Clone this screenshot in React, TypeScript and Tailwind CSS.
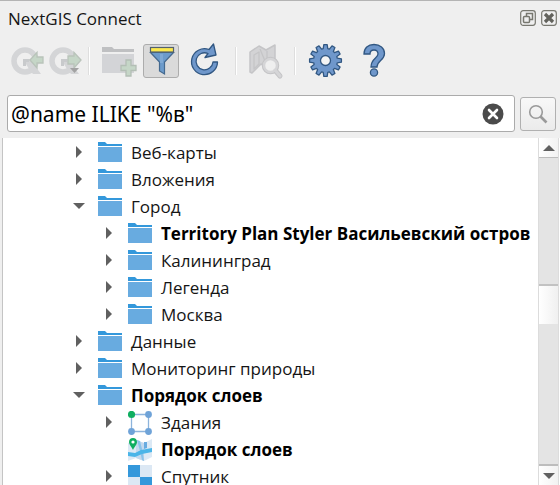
import { useState, type ReactNode } from "react";

type Kind = "folder" | "vector" | "webmap" | "raster";

interface TreeNode {
  label: string;
  kind: Kind;
  depth: 0 | 1;
  arrow?: "open" | "closed";
  bold?: boolean;
}

const nodes: TreeNode[] = [
  { label: "Веб-карты", kind: "folder", depth: 0, arrow: "closed" },
  { label: "Вложения", kind: "folder", depth: 0, arrow: "closed" },
  { label: "Город", kind: "folder", depth: 0, arrow: "open" },
  { label: "Territory Plan Styler Васильевский остров", kind: "folder", depth: 1, arrow: "closed", bold: true },
  { label: "Калининград", kind: "folder", depth: 1, arrow: "closed" },
  { label: "Легенда", kind: "folder", depth: 1, arrow: "closed" },
  { label: "Москва", kind: "folder", depth: 1, arrow: "closed" },
  { label: "Данные", kind: "folder", depth: 0, arrow: "closed" },
  { label: "Мониторинг природы", kind: "folder", depth: 0, arrow: "closed" },
  { label: "Порядок слоев", kind: "folder", depth: 0, arrow: "open", bold: true },
  { label: "Здания", kind: "vector", depth: 1, arrow: "closed" },
  { label: "Порядок слоев", kind: "webmap", depth: 1, bold: true },
  { label: "Спутник", kind: "raster", depth: 1, arrow: "closed" },
];

function NodeIcon({ kind }: { kind: Kind }) {
  return (
    <svg viewBox="0 0 24 24" className="size-6 shrink-0" aria-hidden="true">
      {kind === "folder" && (
        <>
          <path d="M0 1h7l2 2h15v2H0z" fill="#3498db" />
          <path d="M0 6h24v15H0z" fill="#68abe0" />
        </>
      )}
      {kind === "vector" && (
        <>
          <path d="M3.5 3.5h17v17h-17z" fill="none" stroke="#8db4dc" strokeWidth="1.3" />
          <circle cx="20.5" cy="3.5" r="3.4" fill="#6fa3d8" />
          <circle cx="3.5" cy="20.5" r="3.4" fill="#6fa3d8" />
          <circle cx="20.5" cy="20.5" r="3.4" fill="#6fa3d8" />
          <circle cx="3.5" cy="3.5" r="3.6" fill="#0fae60" />
        </>
      )}
      {kind === "webmap" && (
        <>
          <path d="M0 5l8-3 8 3 8-4v18l-8 4-8-3-8 3z" fill="#dce9f5" />
          <path d="M8 2l8 3v18l-8-3z" fill="#c3d9ee" />
          <path d="M9 2l3 1 3 12 1 8-2-1-2-9z" fill="#8ac3ea" />
          <path d="M0 14l7 1 6-3 11-2v4l-10 2-7 3-7-1z" fill="#4bb5e8" />
          <path d="M16 4l3 0 0 6-3 1z" fill="#68abe0" />
          <path d="M5 0a4.2 4.2 0 0 1 4 4c0 3-3 5-4 8C4 9 1 7 1 4a4.2 4.2 0 0 1 4-4z" fill="#0fae60" />
          <circle cx="5" cy="4" r="1.6" fill="#fff" />
        </>
      )}
      {kind === "raster" && (
        <>
          <path d="M0 0h24v24H0z" fill="#dce8f4" />
          <path d="M0 0h12v12H0zM12 12h12v12H12z" fill="#3498db" />
        </>
      )}
    </svg>
  );
}

function Arrow({ state }: { state: "open" | "closed" }) {
  return (
    <svg viewBox="0 0 12 12" className="size-3" aria-hidden="true">
      <path d={state === "open" ? "M0 3h12L6 9z" : "M3 0l6 6-6 6z"} fill="#606060" />
    </svg>
  );
}

function TreeRow({ node }: { node: TreeNode }) {
  return (
    <li
      role="treeitem"
      aria-expanded={node.arrow ? node.arrow === "open" : undefined}
      className={`flex h-[27px] items-center whitespace-nowrap ${node.depth === 1 ? "pl-[100px]" : "pl-[70px]"} ${node.bold ? "font-bold text-black" : ""}`}
    >
      <span className="mr-[13px] flex w-3 shrink-0 pb-0.5">
        {node.arrow && (
          <button type="button" aria-label={`Toggle ${node.label}`}>
            <Arrow state={node.arrow} />
          </button>
        )}
      </span>
      <NodeIcon kind={node.kind} />
      <span className="ml-[9px]">{node.label}</span>
    </li>
  );
}

function ToolButton({ label, pressed, disabled, children }: { label: string; pressed?: boolean; disabled?: boolean; children: ReactNode }) {
  return (
    <button
      type="button"
      aria-label={label}
      aria-pressed={pressed}
      disabled={disabled}
      className={`flex h-[34px] w-9 shrink-0 items-center justify-center rounded-[3px] border ${pressed ? "border-[#acacac] bg-[#dadada]" : "border-transparent"}`}
    >
      <svg viewBox="0 0 34 32" className="h-8 w-[34px] shrink-0 overflow-visible" aria-hidden="true">
        {children}
      </svg>
    </button>
  );
}

function Separator() {
  return <div className="h-7 w-0.5 shrink-0 border-l border-[#dedede] bg-white" />;
}

function QLogo() {
  return (
    <>
      <circle cx="14" cy="16" r="11" fill="none" stroke="#d4d5d7" strokeWidth="5.500" />
      <path d="M12 14h7l11 15h-8l-4-5z" fill="#d4d5d7" />
      <path d="M12 14h6v3h-3v4h-3z" fill="#c8cacc" />
    </>
  );
}

const gearPath = Array.from({ length: 12 }, (_, i) => {
  const points = [
    [12, -11],
    [16, -6],
    [16, 6],
    [12, 11],
  ].map(([r, deg]) => {
    const a = ((i * 30 + deg) * Math.PI) / 180;
    return `${(17.5 + r * Math.sin(a)).toFixed(2)} ${(15.5 - r * Math.cos(a)).toFixed(2)}`;
  });
  return `${i === 0 ? "M" : "L"}${points.join("L")}`;
}).join("") + "z";

export default function App() {
  const [query, setQuery] = useState('@name ILIKE "%в"');

  return (
    <main className="flex h-screen flex-col overflow-hidden border-t border-[#b4b4b4] bg-[#efefef] font-['Open_Sans','Noto_Sans',sans-serif] text-[17px] text-[#151515]">
      <header className="flex h-9 shrink-0 items-center justify-between pr-[3px] pl-2">
        <h1>NextGIS Connect</h1>
        <div className="flex gap-[5px] pb-0.5">
          <button type="button" aria-label="Float panel">
            <svg viewBox="0 0 16 16" className="size-4" fill="none" stroke="#77776f">
              <rect x=".7" y=".7" width="14.6" height="14.6" rx="2.5" strokeWidth="1.2" />
              <path d="M6.5 6V3.5h6v6H10" strokeWidth="1.5" />
              <rect x="3.5" y="6.5" width="6" height="6" rx="1" strokeWidth="1.5" />
            </svg>
          </button>
          <button type="button" aria-label="Close panel">
            <svg viewBox="0 0 16 16" className="size-4" fill="none" stroke="#77776f">
              <rect x=".7" y=".7" width="14.6" height="14.6" rx="2.5" strokeWidth="1.2" />
              <path d="M4 4l8 8M12 4l-8 8" stroke="#62625c" strokeWidth="3.2" />
            </svg>
          </button>
        </div>
      </header>

      <div role="toolbar" aria-label="Connect tools" className="flex h-12 shrink-0 items-center pl-[10px]">
        <ToolButton label="Add to QGIS" disabled>
          <QLogo />
          <path d="M19 15l7-7.500V12h6v6h-6v5z" fill="#c5d6c7" stroke="#b9c3ba" strokeWidth="1.300" />
        </ToolButton>
        <div className="w-0.5" />
        <ToolButton label="Upload to NextGIS Web" disabled>
          <QLogo />
          <path d="M32 15l-7-7.500V11h-6v8h6v4z" fill="#c5d6c7" stroke="#b9c3ba" strokeWidth="1.300" />
          <path d="M21 23h9l-4.500 5z" fill="#a2a2a2" />
        </ToolButton>
        <div className="w-1" />
        <Separator />
        <div className="w-[11px]" />
        <ToolButton label="Create resource group" disabled>
          <path d="M0 6V2h10l2 2h20v3H0z" fill="#bfc0c2" />
          <path d="M0 9h32v19H0z" fill="#d3d4d7" />
          <path d="M24 15h5v5.500h5v5h-5V31h-5v-5.500h-5v-5h5z" fill="#c5d6c7" stroke="#b3beb5" strokeWidth="1.300" />
        </ToolButton>
        <div className="w-[6px]" />
        <ToolButton label="Filter" pressed>
          <path d="M6.500 7.500h23l-9 9.500v12l-5-3v-9z" fill="#6c9bcb" stroke="#44698f" strokeWidth="1.200" />
          <path d="M16 18V9h3v9z" fill="#7fa9d4" />
          <rect x="6.500" y="2.500" width="23" height="4.500" fill="#fce94f" stroke="#55616c" strokeWidth="1.200" />
        </ToolButton>
        <div className="w-[9px]" />
        <ToolButton label="Refresh">
          <g fill="#6f97cb" stroke="#315782" strokeWidth="1.300" strokeLinejoin="round">
            <path d="M28.500 17A13 13 0 1 1 20 4.500L24.500 -1L27 10L16 12.500L19 8.500A8.500 8.500 0 1 0 24 17z" />
          </g>
        </ToolButton>
        <div className="w-[11px]" />
        <Separator />
        <div className="w-[11px]" />
        <ToolButton label="Open map in browser" disabled>
          <g stroke="#c5c5c7" strokeLinejoin="round">
            <path d="M1 7l9-6 7 4 9-5v18l-8 4-6-3-9 9-2-1z" fill="#d3d3d5" strokeWidth="1.500" />
            <path d="M5 10l5-3v12l-5 5zM11 4l5 12M18 6v8" fill="none" strokeWidth="1.300" />
            <path d="M25 24l6 7" strokeWidth="5" strokeLinecap="round" />
            <circle cx="21.500" cy="20.500" r="6.500" fill="#efefef" stroke="#c4c4c6" strokeWidth="4.500" />
            <circle cx="21.500" cy="20.500" r="6.500" fill="#efefef" stroke="#d5d5d7" strokeWidth="2.500" />
            <path d="M26 25l5 6" stroke="#d5d5d7" strokeWidth="3" strokeLinecap="round" />
          </g>
        </ToolButton>
        <div className="w-[10px]" />
        <Separator />
        <div className="w-[11px]" />
        <ToolButton label="Settings">
          <path d={gearPath} fill="#6f97cb" stroke="#315782" strokeWidth="1.300" strokeLinejoin="round" />
          <circle cx="17.500" cy="15.500" r="5" fill="#f4f4f4" stroke="#315782" strokeWidth="1.300" />
        </ToolButton>
        <div className="w-[13px]" />
        <ToolButton label="Help">
          <g fill="#6f97cb" stroke="#315782" strokeWidth="1.300">
            <path d="M7 9C7 3 11 -.5 17 -.5S27.500 3 27.500 8.500c0 7-7.500 7-7.500 13.500h-6c0-8.500 7-9 7-13C21 6.500 19.500 5 17 5s-4 1.500-4 4z" />
            <circle cx="17" cy="27.500" r="3.600" />
          </g>
        </ToolButton>
      </div>

      <form className="flex shrink-0 items-center gap-[5px] pt-[10px] pr-1 pb-[6px] pl-[7px]" onSubmit={(e) => e.preventDefault()}>
        <div className="flex h-[37px] min-w-0 flex-1 items-center rounded-[3px] border border-[#ababab] bg-white pr-[10px] pl-[3px]">
          <input
            aria-label="Search resources"
            value={query}
            onChange={(e) => setQuery(e.target.value)}
            className="min-w-0 flex-1 bg-transparent font-['Noto_Sans',sans-serif] text-[21px] leading-7 text-black outline-none"
          />
          <button type="button" aria-label="Clear" onClick={() => setQuery("")}>
            <svg viewBox="0 0 22 22" className="size-[22px]">
              <circle cx="11" cy="11" r="10.500" fill="#4b4b4b" />
              <path d="M7 7l8 8M15 7l-8 8" stroke="#fff" strokeWidth="2.600" strokeLinecap="round" />
            </svg>
          </button>
        </div>
        <button type="submit" aria-label="Search" className="flex h-[34px] w-9 items-center justify-center rounded-[3px] border border-[#b0b0b0] bg-linear-to-b from-[#f8f8f8] to-[#ebebeb]">
          <svg viewBox="0 0 20 20" className="size-5" fill="none" stroke="#9a9a9a">
            <circle cx="8" cy="8" r="6.300" strokeWidth="1.600" />
            <path d="M12.500 12.500l6 6" strokeWidth="2.600" />
          </svg>
        </button>
      </form>

      <section className="ml-0.5 flex min-h-0 flex-1 border-l border-[#c4c4c4] bg-white">
        <ul role="tree" aria-label="Resources" className="min-w-0 flex-1 overflow-hidden pt-px">
          {nodes.map((node, i) => (
            <TreeRow key={i} node={node} />
          ))}
        </ul>
        <div className="mr-px flex w-[21px] shrink-0 flex-col border-x border-[#dcdcdc] bg-[#e4e4e4]">
          <button type="button" aria-label="Scroll up" className="flex h-5 shrink-0 items-center justify-center border-b border-[#bdbdbd] bg-linear-to-r from-white to-[#f2f2f2]">
            <svg viewBox="0 0 12 6" className="h-1.5 w-3"><path d="M6 0l6 6H0z" fill="#606060" /></svg>
          </button>
          <div className="flex-[126]" />
          <div className="h-10 shrink-0 border-t-2 border-[#c2c2c2] bg-linear-to-r from-white to-[#f0f0f0]" />
          <div className="flex-[140]" />
          <button type="button" aria-label="Scroll down" className="flex h-[21px] shrink-0 items-center justify-center border-t-2 border-[#bdbdbd] bg-linear-to-r from-white to-[#f2f2f2]">
            <svg viewBox="0 0 12 6" className="h-1.5 w-3"><path d="M0 0h12L6 6z" fill="#606060" /></svg>
          </button>
        </div>
      </section>
    </main>
  );
}
